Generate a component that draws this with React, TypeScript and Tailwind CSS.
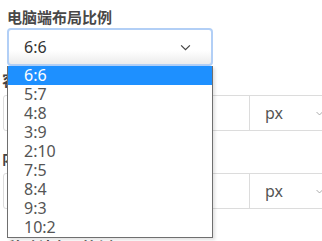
const ratios = ["6:6", "5:7", "4:8", "3:9", "2:10", "7:5", "8:4", "9:3", "10:2"];

function Chevron({ className }: { className?: string }) {
  return (
    <svg viewBox="0 0 12 8" className={className} fill="none" stroke="currentColor" strokeWidth="1.4">
      <path d="M1 1.5 L6 6.5 L11 1.5" />
    </svg>
  );
}

function UnitRow() {
  return (
    <div className="ml-[3px] flex h-[36px] w-[330px] rounded-l-[3px] border border-[#dcdcdc] bg-white">
      <div className="w-[246px] border-r border-[#dcdcdc]" />
      <div className="flex flex-1 items-center pl-[15px] text-[16px] text-[#555]">
        <span>px</span>
        <Chevron className="ml-[33px] h-[5px] w-[7px] text-[#999]" />
      </div>
    </div>
  );
}

export default function App() {
  return (
    <div className="relative h-[241px] w-full overflow-hidden bg-white font-['Noto_Sans','Noto_Sans_CJK_SC',sans-serif]">
      <div className="px-[7px] pt-[7px]">
        <div className="mb-[1px] text-[15px] font-bold leading-[20px] text-[#484848]">电脑端布局比例</div>
        <div className="flex h-[38px] w-[206px] items-center justify-between rounded-[4px] border-2 border-[#b2cff6] bg-gradient-to-b from-white from-60% to-[#ececec] pl-[15px] pr-[20px]">
          <span className="text-[16px] leading-[19px] text-[#333]">6:6</span>
          <Chevron className="h-[7px] w-[11px] text-[#444]" />
        </div>
      </div>

      <div className="pl-[2px]">
        <div className="mt-[4px] text-[15px] font-bold leading-[20px] text-[#444]">容器宽度</div>
      </div>
      <div className="mt-[5px]">
        <UnitRow />
      </div>
      <div className="pl-[2px]">
        <div className="mt-[17px] text-[15px] font-bold leading-[20px] text-[#444]">内容宽度</div>
      </div>
      <div className="mt-[5px]">
        <UnitRow />
      </div>
      <div className="pl-[8px]">
        <div className="mt-[28px] text-[15px] font-bold leading-[20px] text-[#444]">移动端布局比例</div>
      </div>

      <ul className="absolute left-[7px] top-[66px] w-[206px] border-x border-b border-[#6f6f6f] bg-white shadow-[2px_2px_3px_rgba(0,0,0,0.12)]">
        {ratios.map((r, i) => (
          <li
            key={r}
            className={
              i === 0
                ? "h-[19px] bg-[#1e90ff] pl-[16px] text-[16px] leading-[19px] text-white"
                : "h-[19px] pl-[16px] text-[16px] leading-[19px] text-[#555]"
            }
          >
            {r}
          </li>
        ))}
      </ul>
    </div>
  );
}
